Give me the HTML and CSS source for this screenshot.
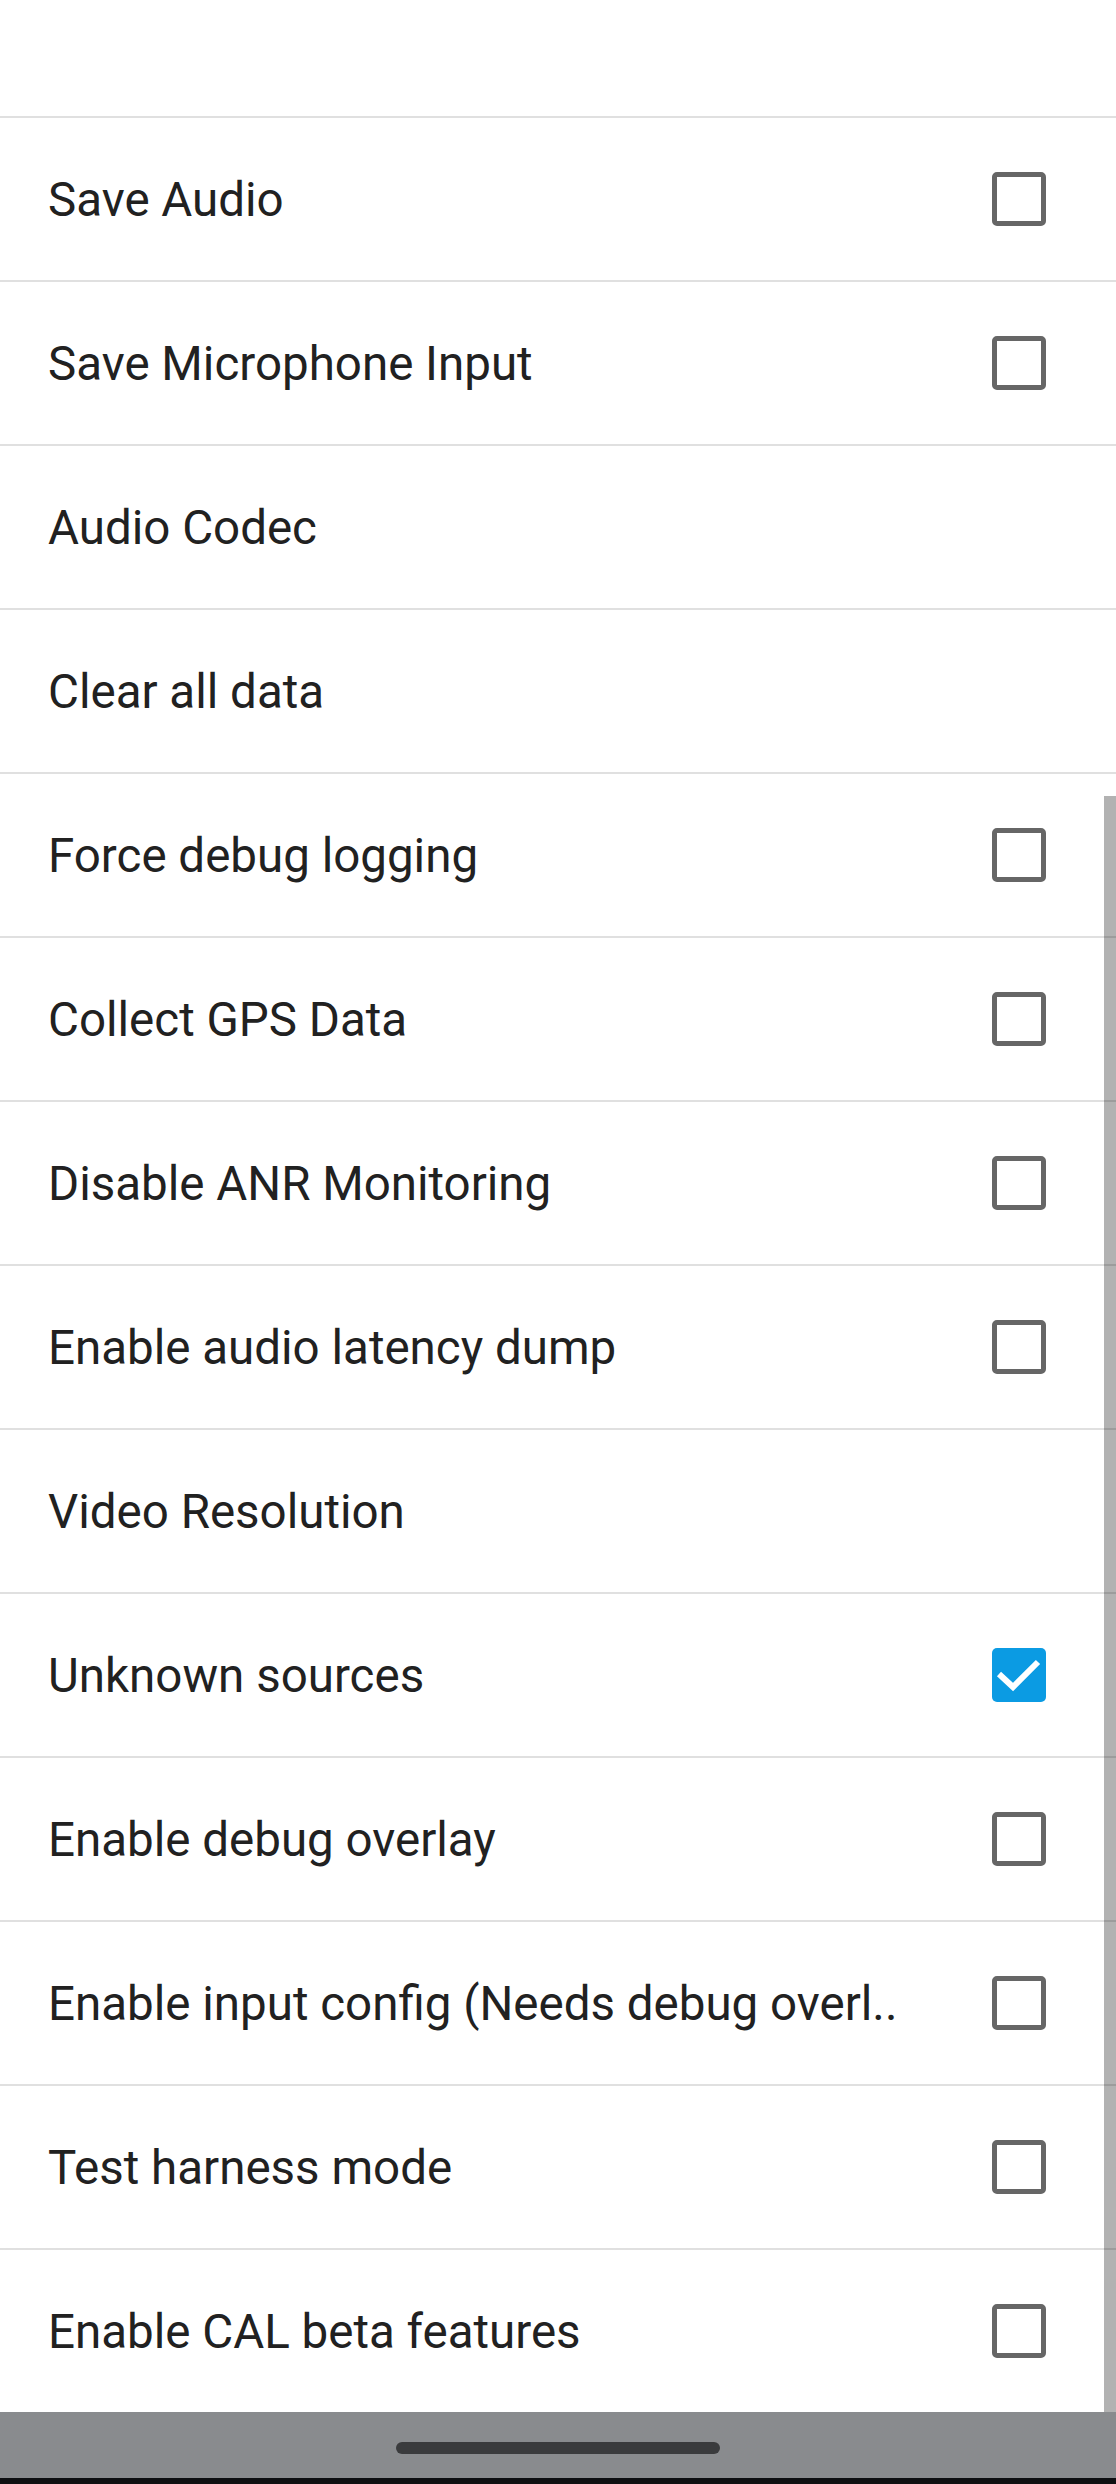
FILE: index.html
```html
<!DOCTYPE html>
<html>
<head>
<meta charset="utf-8">
<link rel="stylesheet" href="styles.css">
</head>
<body>
<div class="screen">
  <div class="topbar"></div>
  <div class="list">
    <div class="row"><span class="label">Save Audio</span><span class="box"></span></div>
    <div class="row"><span class="label">Save Microphone Input</span><span class="box"></span></div>
    <div class="row"><span class="label">Audio Codec</span></div>
    <div class="row"><span class="label">Clear all data</span></div>
    <div class="row"><span class="label">Force debug logging</span><span class="box"></span></div>
    <div class="row"><span class="label">Collect GPS Data</span><span class="box"></span></div>
    <div class="row"><span class="label">Disable ANR Monitoring</span><span class="box"></span></div>
    <div class="row"><span class="label">Enable audio latency dump</span><span class="box"></span></div>
    <div class="row"><span class="label">Video Resolution</span></div>
    <div class="row"><span class="label">Unknown sources</span><span class="box checked"><svg viewBox="0 0 54 54" width="54" height="54"><path d="M7 26 L21 39 L46 14" fill="none" stroke="#fff" stroke-width="6"/></svg></span></div>
    <div class="row"><span class="label">Enable debug overlay</span><span class="box"></span></div>
    <div class="row"><span class="label">Enable input config (Needs debug overl..</span><span class="box"></span></div>
    <div class="row"><span class="label">Test harness mode</span><span class="box"></span></div>
    <div class="row last"><span class="label">Enable CAL beta features</span><span class="box"></span></div>
  </div>
  <div class="scrollbar"></div>
  <div class="navbar"><div class="handle"></div></div>
  <div class="bottomedge"></div>
</div>
</body>
</html>
```
FILE: styles.css
```css
html, body {
  margin: 0;
  padding: 0;
  background: #ffffff;
}
.screen {
  position: relative;
  width: 1116px;
  height: 2484px;
  overflow: hidden;
  font-family: Roboto, "Noto Sans", sans-serif;
  display: flex;
  flex-direction: column;
}
.topbar {
  height: 116px;
  border-bottom: 2px solid #e0e0e0;
  flex: none;
}
.list {
  display: flex;
  flex-direction: column;
  flex: none;
}
.row {
  height: 162px;
  border-bottom: 2px solid #e0e0e0;
  display: flex;
  align-items: center;
  justify-content: space-between;
  padding: 0 70px 0 48px;
  box-sizing: content-box;
}
.row.last {
  height: 162px;
  border-bottom: none;
}
.label {
  font-size: 47.5px;
  color: #212121;
  white-space: nowrap;
  line-height: 1;
  padding-top: 4px;
}
.box {
  width: 54px;
  height: 54px;
  box-sizing: border-box;
  border: 5px solid #666666;
  border-radius: 5px;
  flex: none;
  display: block;
  position: relative;
}
.box.checked {
  border: none;
  background: #0b9be3;
  border-radius: 5px;
}
.box.checked svg {
  display: block;
}
.scrollbar {
  position: absolute;
  right: 0;
  top: 796px;
  width: 12px;
  height: 1616px;
  background: rgba(0, 0, 0, 0.3);
}
.navbar {
  height: 66px;
  background: #898b8e;
  display: flex;
  justify-content: center;
  align-items: flex-start;
  flex: none;
}
.handle {
  margin-top: 30px;
  width: 324px;
  height: 12px;
  border-radius: 6px;
  background: #3a3b3d;
}
.bottomedge {
  height: 6px;
  background: #0e0f12;
  flex: none;
}
```
